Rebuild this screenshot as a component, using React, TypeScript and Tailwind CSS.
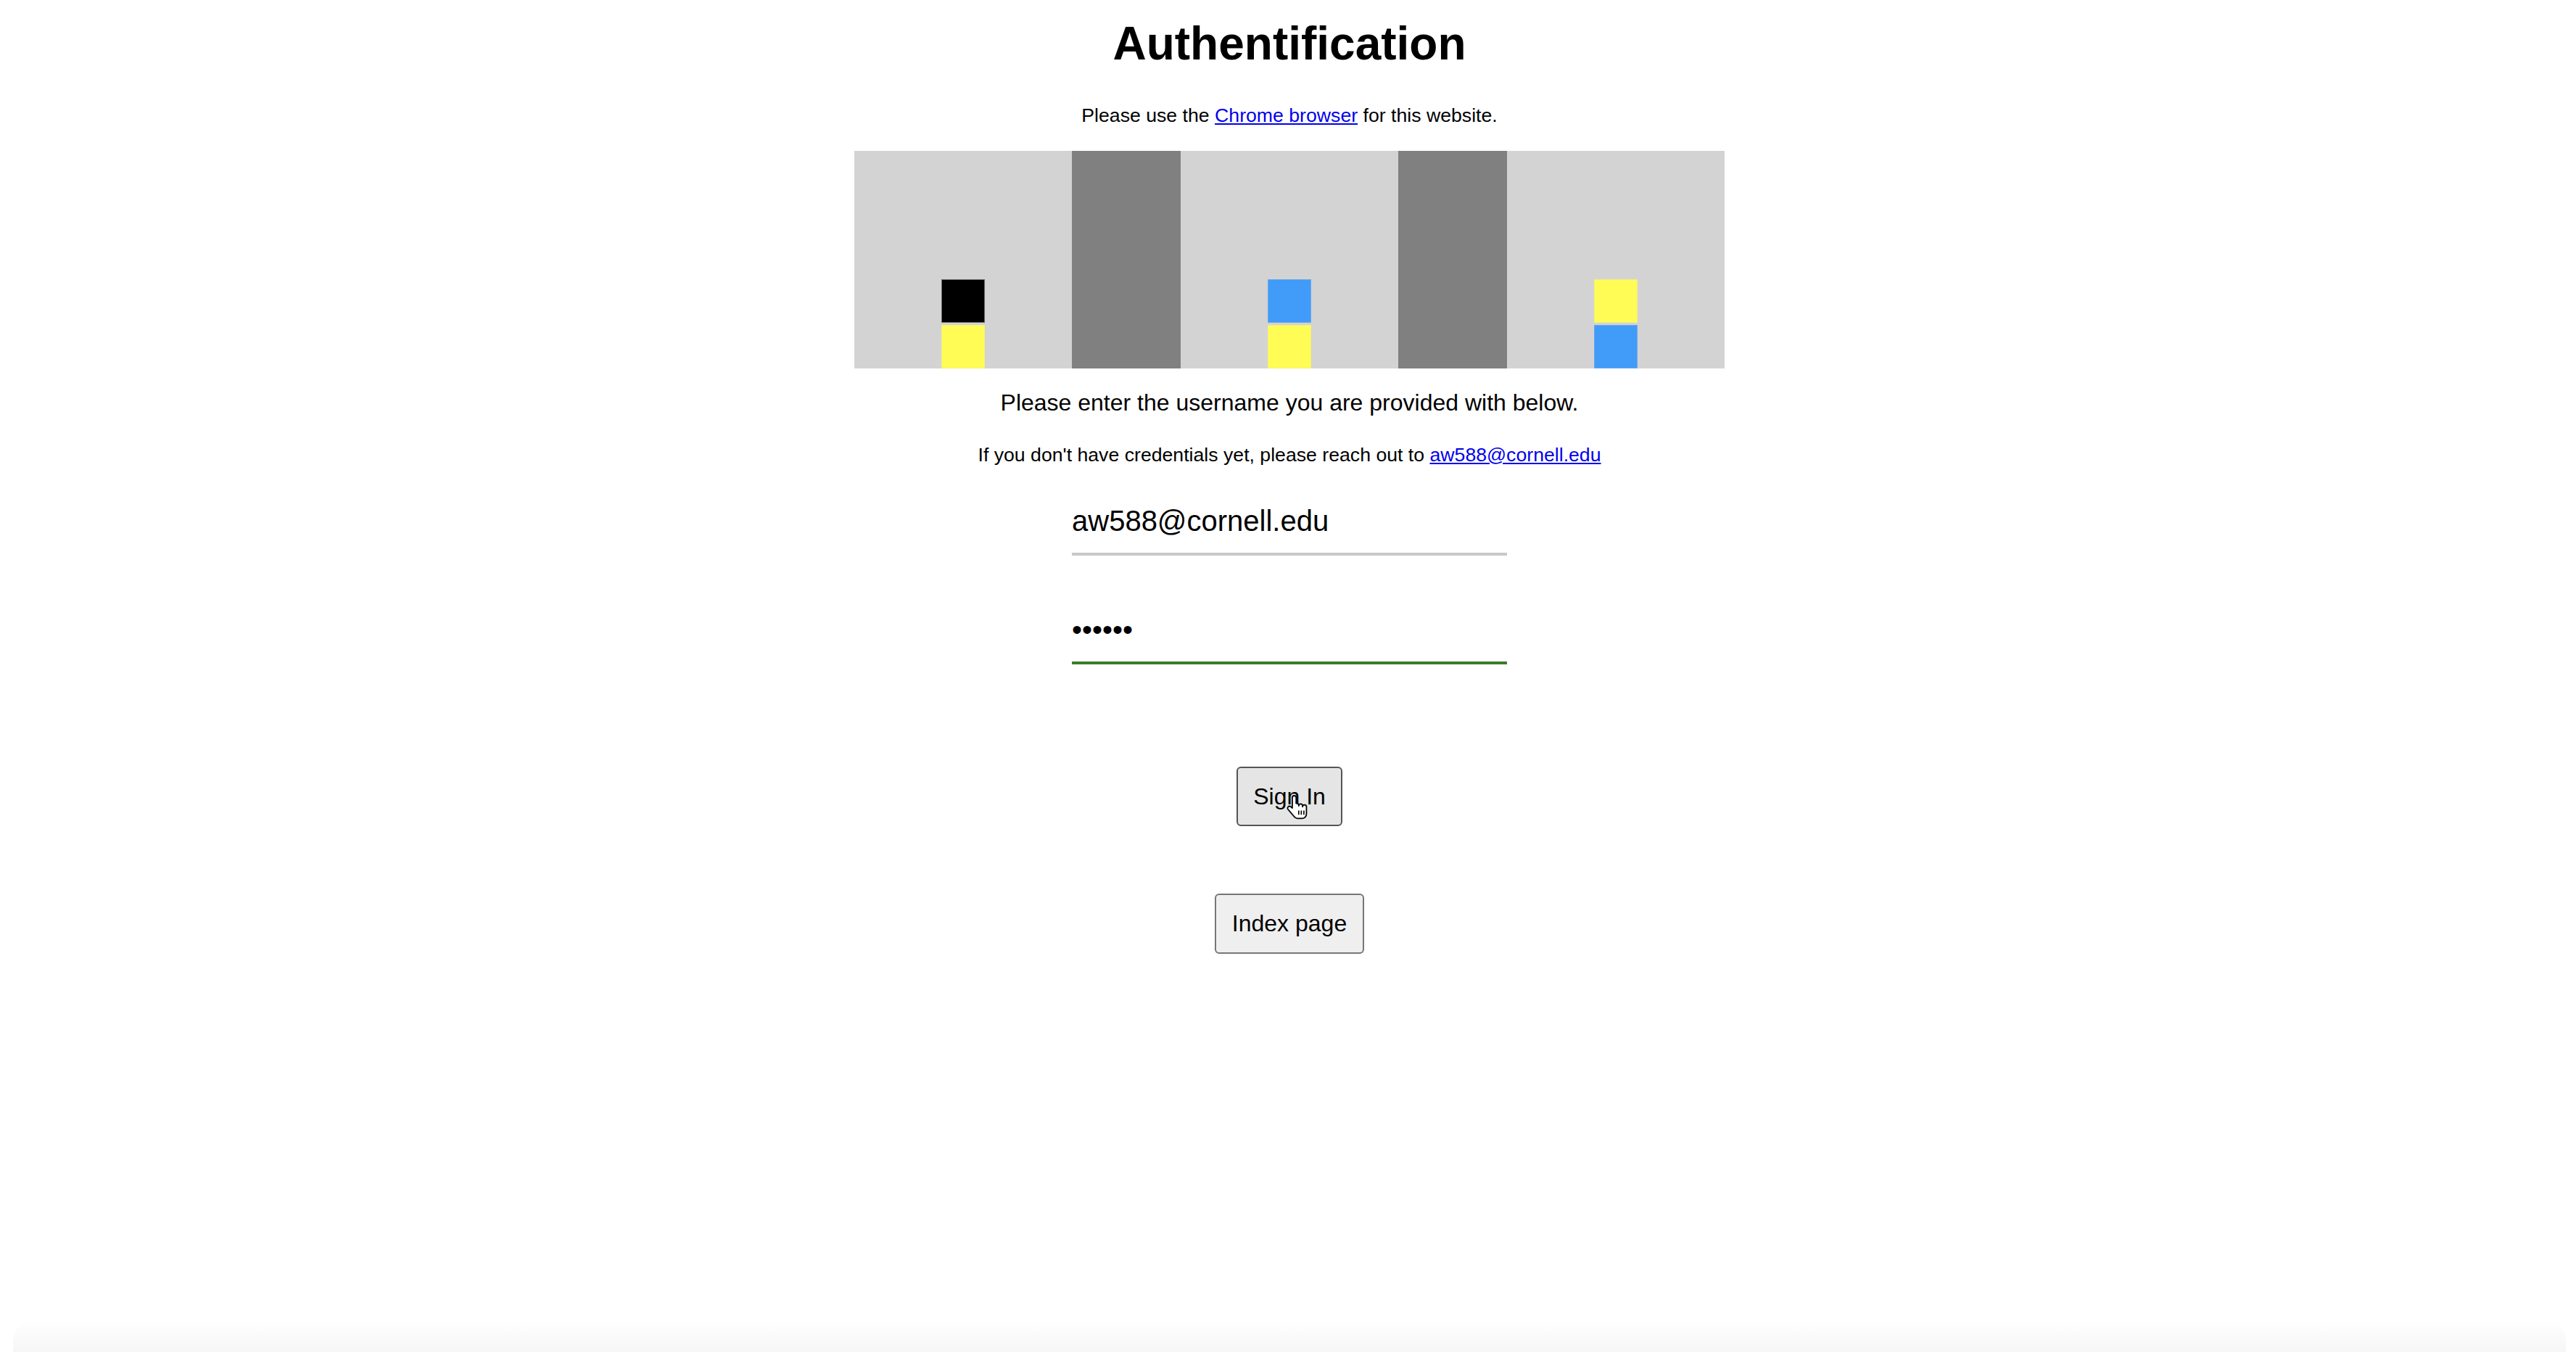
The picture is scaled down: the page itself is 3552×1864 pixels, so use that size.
import { useState } from 'react';

const cell = 'w-[60px] h-[60px]';

function Column({ top, bottom }: { top: string; bottom: string }) {
  return (
    <div className="w-[300px] h-full bg-[#d3d3d3] flex flex-col justify-end items-center gap-[3px]">
      <div className={`${cell} ${top}`} />
      <div className={`${cell} ${bottom}`} />
    </div>
  );
}

function HandCursor() {
  return (
    <svg
      viewBox="0 0 18 20"
      className="absolute left-[66px] top-[36px] w-[32px] h-[36px] pointer-events-none"
    >
      <path
        d="M6.5 1C5.7 1 5 1.7 5 2.5V10.6L4 9.6C3.4 9 2.4 9 1.8 9.6C1.2 10.2 1.2 11.1 1.8 11.7L5.6 16.2C6.6 17.5 7.5 18.6 9 18.6H12.5C14.5 18.6 16 17.1 16 15.1V9.6C16 8.8 15.3 8.1 14.5 8.1C13.7 8.1 13 8.8 13 9.6V8.9C13 8.1 12.3 7.4 11.5 7.4C10.7 7.4 10 8.1 10 8.9V8.4C10 7.6 9.3 6.9 8.5 6.9C8.3 6.9 8.1 6.95 8 7V2.5C8 1.7 7.3 1 6.5 1Z"
        fill="white"
        stroke="black"
        strokeWidth="1"
        strokeLinejoin="round"
      />
      <path d="M10 12.5V15.8M12 12.5V15.8M14 12.5V15.8" stroke="black" strokeWidth="0.9" />
    </svg>
  );
}

export default function App() {
  const [username, setUsername] = useState('aw588@cornell.edu');
  const [password, setPassword] = useState('secret');

  return (
    <div className="h-screen flex flex-col items-center pl-[4px] bg-white text-black font-['Liberation_Sans',Arial,sans-serif]">
      <h1 className="mt-[28px] text-[64px] leading-[64px] font-bold">Authentification</h1>

      <p className="mt-[51px] text-[26.67px] leading-[32px]">
        Please use the{' '}
        <a href="#" className="text-[#0000ee] underline">
          Chrome browser
        </a>{' '}
        for this website.
      </p>

      <div className="mt-[33px] flex w-[1200px] h-[300px]">
        <Column top="bg-black border border-[#666]" bottom="bg-[#fefc55] border border-[#f3ef7a]" />
        <div className="w-[150px] h-full bg-[#808080]" />
        <Column top="bg-[#419bf8] border border-[#6aa9ea]" bottom="bg-[#fefc55] border border-[#f3ef7a]" />
        <div className="w-[150px] h-full bg-[#808080]" />
        <Column top="bg-[#fefc55] border border-[#f3ef7a]" bottom="bg-[#419bf8] border border-[#6aa9ea]" />
      </div>

      <p className="mt-[27px] text-[32px] leading-[40px]">
        Please enter the username you are provided with below.
      </p>

      <p className="mt-[36px] text-[26.67px] leading-[32px]">
        If you don't have credentials yet, please reach out to{' '}
        <a href="#" className="text-[#0000ee] underline">
          aw588@cornell.edu
        </a>
      </p>

      <input
        type="text"
        value={username}
        onChange={(e) => setUsername(e.target.value)}
        className="mt-[31px] w-[600px] h-[92px] border-b-4 border-[#c8c8c8] text-[40px] outline-none bg-transparent"
      />

      <input
        type="password"
        value={password}
        onChange={(e) => setPassword(e.target.value)}
        className="mt-[58px] w-[600px] h-[92px] border-b-4 border-[#3b7d2a] text-[40px] outline-none bg-transparent"
      />

      <button className="relative mt-[141px] h-[82px] px-[21px] text-[32px] leading-[37px] bg-[#e5e5e5] border-2 border-[#555] rounded-[6px]">
        Sign In
        <HandCursor />
      </button>

      <button className="mt-[93px] h-[83px] px-[22px] text-[32px] leading-[37px] bg-[#efefef] border-2 border-[#767676] rounded-[6px]">
        Index page
      </button>

      <div className="mt-auto w-[3520px] h-[44px] rounded-t-[28px] bg-gradient-to-b from-white to-[#f6f6f6]" />
    </div>
  );
}
